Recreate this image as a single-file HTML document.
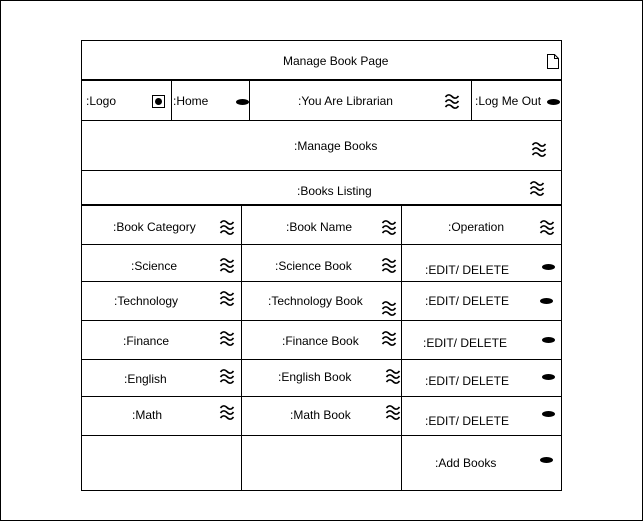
<!DOCTYPE html><html><head><style>
body{margin:0;width:644px;height:522px;background:#fff;position:relative;font-family:"Liberation Sans",sans-serif;font-size:12px;color:#000;overflow:hidden}
.b{position:absolute;border:1px solid #000;box-sizing:border-box}
.l{position:absolute;background:#000}
.t{position:absolute;white-space:nowrap;line-height:14px}
.w{position:absolute;width:16px;height:17px}
.e{position:absolute;width:13px;height:6px;border-radius:50%;background:#000}
</style></head><body>
<div class="b" style="left:0;top:0;width:643px;height:521px"></div>
<div class="b" style="left:81px;top:40px;width:481px;height:451px"></div>
<div class="l" style="left:81px;top:79px;width:481px;height:2px"></div>
<div class="l" style="left:81px;top:120px;width:481px;height:1px"></div>
<div class="l" style="left:81px;top:170px;width:481px;height:1px"></div>
<div class="l" style="left:81px;top:204px;width:481px;height:2px"></div>
<div class="l" style="left:81px;top:244px;width:481px;height:1px"></div>
<div class="l" style="left:81px;top:281px;width:481px;height:1px"></div>
<div class="l" style="left:81px;top:320px;width:481px;height:1px"></div>
<div class="l" style="left:81px;top:359px;width:481px;height:1px"></div>
<div class="l" style="left:81px;top:396px;width:481px;height:1px"></div>
<div class="l" style="left:81px;top:435px;width:481px;height:1px"></div>
<div class="l" style="left:171px;top:80px;width:1px;height:40px"></div>
<div class="l" style="left:249px;top:80px;width:1px;height:40px"></div>
<div class="l" style="left:471px;top:80px;width:1px;height:40px"></div>
<div class="l" style="left:241px;top:205px;width:1px;height:286px"></div>
<div class="l" style="left:401px;top:205px;width:1px;height:286px"></div>

<div class="t" style="left:283px;top:54px">Manage Book Page</div>
<svg style="position:absolute;left:546px;top:53px" width="14" height="17"><path d="M1.5 1.5H8.5L12.5 5.5V15.5H1.5Z M8.5 1.5V5.5H12.5" fill="none" stroke="#000"/></svg>

<div class="t" style="left:86px;top:94px">:Logo</div>
<div class="b" style="left:152px;top:95px;width:13px;height:13px"></div>
<div style="position:absolute;left:155px;top:98px;width:7px;height:7px;border-radius:50%;background:#000"></div>
<div class="t" style="left:173px;top:94px">:Home</div>
<div class="e" style="left:236px;top:99px"></div>
<div class="t" style="left:298px;top:94px">:You Are Librarian</div>
<svg class="w" style="left:444px;top:93px" viewBox="0 0 16 17"><path d="M1.5 4Q4.5 0 8 3.5T14.5 3M1.5 9Q4.5 5 8 8.5T14.5 8M1.5 14Q4.5 10 8 13.5T14.5 13" fill="none" stroke="#000" stroke-width="1.6"/></svg>
<div class="t" style="left:475px;top:94px">:Log Me Out</div>
<div class="e" style="left:547px;top:99px"></div>

<div class="t" style="left:294px;top:139px">:Manage Books</div>
<svg class="w" style="left:531px;top:141px" viewBox="0 0 16 17"><path d="M1.5 4Q4.5 0 8 3.5T14.5 3M1.5 9Q4.5 5 8 8.5T14.5 8M1.5 14Q4.5 10 8 13.5T14.5 13" fill="none" stroke="#000" stroke-width="1.6"/></svg>
<div class="t" style="left:297px;top:184px">:Books Listing</div>
<svg class="w" style="left:529px;top:180px" viewBox="0 0 16 17"><path d="M1.5 4Q4.5 0 8 3.5T14.5 3M1.5 9Q4.5 5 8 8.5T14.5 8M1.5 14Q4.5 10 8 13.5T14.5 13" fill="none" stroke="#000" stroke-width="1.6"/></svg>

<div class="t" style="left:113px;top:220px">:Book Category</div><svg class="w" style="left:219px;top:219px" viewBox="0 0 16 17"><path d="M1.5 4Q4.5 0 8 3.5T14.5 3M1.5 9Q4.5 5 8 8.5T14.5 8M1.5 14Q4.5 10 8 13.5T14.5 13" fill="none" stroke="#000" stroke-width="1.6"/></svg>
<div class="t" style="left:286px;top:220px">:Book Name</div><svg class="w" style="left:381px;top:219px" viewBox="0 0 16 17"><path d="M1.5 4Q4.5 0 8 3.5T14.5 3M1.5 9Q4.5 5 8 8.5T14.5 8M1.5 14Q4.5 10 8 13.5T14.5 13" fill="none" stroke="#000" stroke-width="1.6"/></svg>
<div class="t" style="left:448px;top:220px">:Operation</div><svg class="w" style="left:539px;top:219px" viewBox="0 0 16 17"><path d="M1.5 4Q4.5 0 8 3.5T14.5 3M1.5 9Q4.5 5 8 8.5T14.5 8M1.5 14Q4.5 10 8 13.5T14.5 13" fill="none" stroke="#000" stroke-width="1.6"/></svg>

<div class="t" style="left:131px;top:259px">:Science</div><svg class="w" style="left:219px;top:257px" viewBox="0 0 16 17"><path d="M1.5 4Q4.5 0 8 3.5T14.5 3M1.5 9Q4.5 5 8 8.5T14.5 8M1.5 14Q4.5 10 8 13.5T14.5 13" fill="none" stroke="#000" stroke-width="1.6"/></svg>
<div class="t" style="left:275px;top:259px">:Science Book</div><svg class="w" style="left:381px;top:257px" viewBox="0 0 16 17"><path d="M1.5 4Q4.5 0 8 3.5T14.5 3M1.5 9Q4.5 5 8 8.5T14.5 8M1.5 14Q4.5 10 8 13.5T14.5 13" fill="none" stroke="#000" stroke-width="1.6"/></svg>
<div class="t" style="left:425px;top:263px">:EDIT/ DELETE</div><div class="e" style="left:542px;top:264px"></div>

<div class="t" style="left:114px;top:294px">:Technology</div><svg class="w" style="left:219px;top:290px" viewBox="0 0 16 17"><path d="M1.5 4Q4.5 0 8 3.5T14.5 3M1.5 9Q4.5 5 8 8.5T14.5 8M1.5 14Q4.5 10 8 13.5T14.5 13" fill="none" stroke="#000" stroke-width="1.6"/></svg>
<div class="t" style="left:268px;top:294px">:Technology Book</div><svg class="w" style="left:381px;top:300px" viewBox="0 0 16 17"><path d="M1.5 4Q4.5 0 8 3.5T14.5 3M1.5 9Q4.5 5 8 8.5T14.5 8M1.5 14Q4.5 10 8 13.5T14.5 13" fill="none" stroke="#000" stroke-width="1.6"/></svg>
<div class="t" style="left:425px;top:294px">:EDIT/ DELETE</div><div class="e" style="left:540px;top:298px"></div>

<div class="t" style="left:123px;top:334px">:Finance</div><svg class="w" style="left:219px;top:330px" viewBox="0 0 16 17"><path d="M1.5 4Q4.5 0 8 3.5T14.5 3M1.5 9Q4.5 5 8 8.5T14.5 8M1.5 14Q4.5 10 8 13.5T14.5 13" fill="none" stroke="#000" stroke-width="1.6"/></svg>
<div class="t" style="left:282px;top:334px">:Finance Book</div><svg class="w" style="left:381px;top:330px" viewBox="0 0 16 17"><path d="M1.5 4Q4.5 0 8 3.5T14.5 3M1.5 9Q4.5 5 8 8.5T14.5 8M1.5 14Q4.5 10 8 13.5T14.5 13" fill="none" stroke="#000" stroke-width="1.6"/></svg>
<div class="t" style="left:423px;top:336px">:EDIT/ DELETE</div><div class="e" style="left:542px;top:337px"></div>

<div class="t" style="left:124px;top:372px">:English</div><svg class="w" style="left:219px;top:368px" viewBox="0 0 16 17"><path d="M1.5 4Q4.5 0 8 3.5T14.5 3M1.5 9Q4.5 5 8 8.5T14.5 8M1.5 14Q4.5 10 8 13.5T14.5 13" fill="none" stroke="#000" stroke-width="1.6"/></svg>
<div class="t" style="left:278px;top:370px">:English Book</div><svg class="w" style="left:385px;top:368px" viewBox="0 0 16 17"><path d="M1.5 4Q4.5 0 8 3.5T14.5 3M1.5 9Q4.5 5 8 8.5T14.5 8M1.5 14Q4.5 10 8 13.5T14.5 13" fill="none" stroke="#000" stroke-width="1.6"/></svg>
<div class="t" style="left:425px;top:374px">:EDIT/ DELETE</div><div class="e" style="left:542px;top:374px"></div>

<div class="t" style="left:132px;top:408px">:Math</div><svg class="w" style="left:219px;top:404px" viewBox="0 0 16 17"><path d="M1.5 4Q4.5 0 8 3.5T14.5 3M1.5 9Q4.5 5 8 8.5T14.5 8M1.5 14Q4.5 10 8 13.5T14.5 13" fill="none" stroke="#000" stroke-width="1.6"/></svg>
<div class="t" style="left:290px;top:408px">:Math Book</div><svg class="w" style="left:385px;top:404px" viewBox="0 0 16 17"><path d="M1.5 4Q4.5 0 8 3.5T14.5 3M1.5 9Q4.5 5 8 8.5T14.5 8M1.5 14Q4.5 10 8 13.5T14.5 13" fill="none" stroke="#000" stroke-width="1.6"/></svg>
<div class="t" style="left:425px;top:414px">:EDIT/ DELETE</div><div class="e" style="left:542px;top:411px"></div>

<div class="t" style="left:435px;top:456px">:Add Books</div><div class="e" style="left:540px;top:457px"></div>
</body></html>
